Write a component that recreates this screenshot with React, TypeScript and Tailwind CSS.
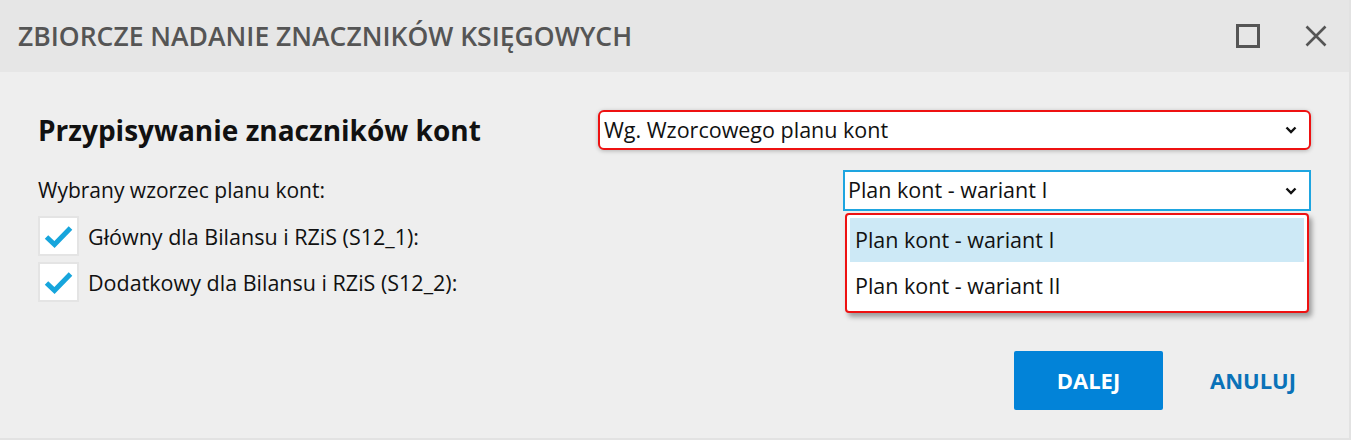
import { useState } from "react";

const font = { fontFamily: '"Open Sans", "Noto Sans", sans-serif' };

function Chevron() {
  return (
    <svg width="12" height="8" viewBox="0 0 12 8" className="shrink-0">
      <path d="M1.5 1.5 L6 6 L10.5 1.5" fill="none" stroke="#111" strokeWidth="2.4" />
    </svg>
  );
}

function Check() {
  return (
    <svg width="29" height="23" viewBox="0 0 29 23">
      <path d="M2.5 12 L10.5 19.5 L26.5 3" fill="none" stroke="#16a5dc" strokeWidth="5" />
    </svg>
  );
}

export default function App() {
  const [wzorzec] = useState("Plan kont - wariant I");
  const warianty = ["Plan kont - wariant I", "Plan kont - wariant II"];

  return (
    <div
      className="w-[1351px] h-[440px] bg-[#eeeeee] flex flex-col border-r-2 border-b-2 border-[#e2e2e2] text-[#111]"
      style={font}
    >
      {/* naglowek */}
      <div className="h-[72px] bg-[#e6e6e6] flex items-center justify-between pl-[18px] pr-[22px] shrink-0">
        <h2 className="text-[26.5px] leading-none font-semibold text-[#555555]">
          ZBIORCZE NADANIE ZNACZNIKÓW KSIĘGOWYCH
        </h2>
        <div className="flex items-center gap-[45px]">
          <div className="w-[24px] h-[24px] border-[3px] border-[#555555]" />
          <svg width="22" height="22" viewBox="0 0 22 22">
            <path d="M1.5 1.5 L20.5 20.5 M20.5 1.5 L1.5 20.5" stroke="#555555" strokeWidth="2.6" />
          </svg>
        </div>
      </div>

      {/* tresc */}
      <div className="flex-1 pl-[38px] pr-[38px] pt-[38px] flex flex-col">
        <div className="flex items-center justify-between">
          <h1 className="text-[28px] leading-none font-bold">Przypisywanie znaczników kont</h1>
          <div className="w-[713px] h-[40px] bg-white border-2 border-[#ee1111] rounded-[6px] shadow-[0_1px_4px_rgba(0,0,0,0.25)] flex items-center justify-between pl-[4px] pr-[12px] text-[21.5px]">
            <span>Wg. Wzorcowego planu kont</span>
            <Chevron />
          </div>
        </div>

        <div className="flex items-center justify-between mt-[20px]">
          <span className="text-[21px] leading-none">Wybrany wzorzec planu kont:</span>
          <div className="relative w-[468px]">
            <div className="h-[41px] bg-white border-2 border-[#1ea5e0] flex items-center justify-between pl-[3px] pr-[12px] text-[21.5px]">
              <span>{wzorzec}</span>
              <Chevron />
            </div>
            <div className="absolute left-[2px] top-full mt-[2px] w-[464px] h-[100px] bg-white border-2 border-[#ee1111] rounded-[4px] shadow-[3px_4px_5px_rgba(0,0,0,0.35)] pt-[3px] px-[3px] text-[21.5px] z-10">
              {warianty.map((w, i) => (
                <div
                  key={w}
                  className={
                    i === 0
                      ? "h-[44px] bg-[#cde9f6] flex items-center pl-[5px]"
                      : "h-[49px] flex items-center pl-[5px]"
                  }
                >
                  {w}
                </div>
              ))}
            </div>
          </div>
        </div>

        <div className="flex flex-col gap-[6px] mt-[5px]">
          {["Główny dla Bilansu i RZiS (S12_1):", "Dodatkowy dla Bilansu i RZiS (S12_2):"].map((l) => (
            <div key={l} className="flex items-center gap-[9px]">
              <div className="w-[41px] h-[40px] bg-white border-2 border-[#e4e4e4] flex items-center justify-center">
                <Check />
              </div>
              <span className="text-[21.5px] leading-none mt-[2px]">{l}</span>
            </div>
          ))}
        </div>

        <div className="flex justify-end items-center mt-[49px] pr-[15px] gap-[47px]">
          <button className="w-[149px] h-[59px] bg-[#0283d8] rounded-[2px] text-white font-bold text-[22px]">
            DALEJ
          </button>
          <button className="text-[#0a72b8] font-bold text-[22px]">ANULUJ</button>
        </div>
      </div>
    </div>
  );
}
